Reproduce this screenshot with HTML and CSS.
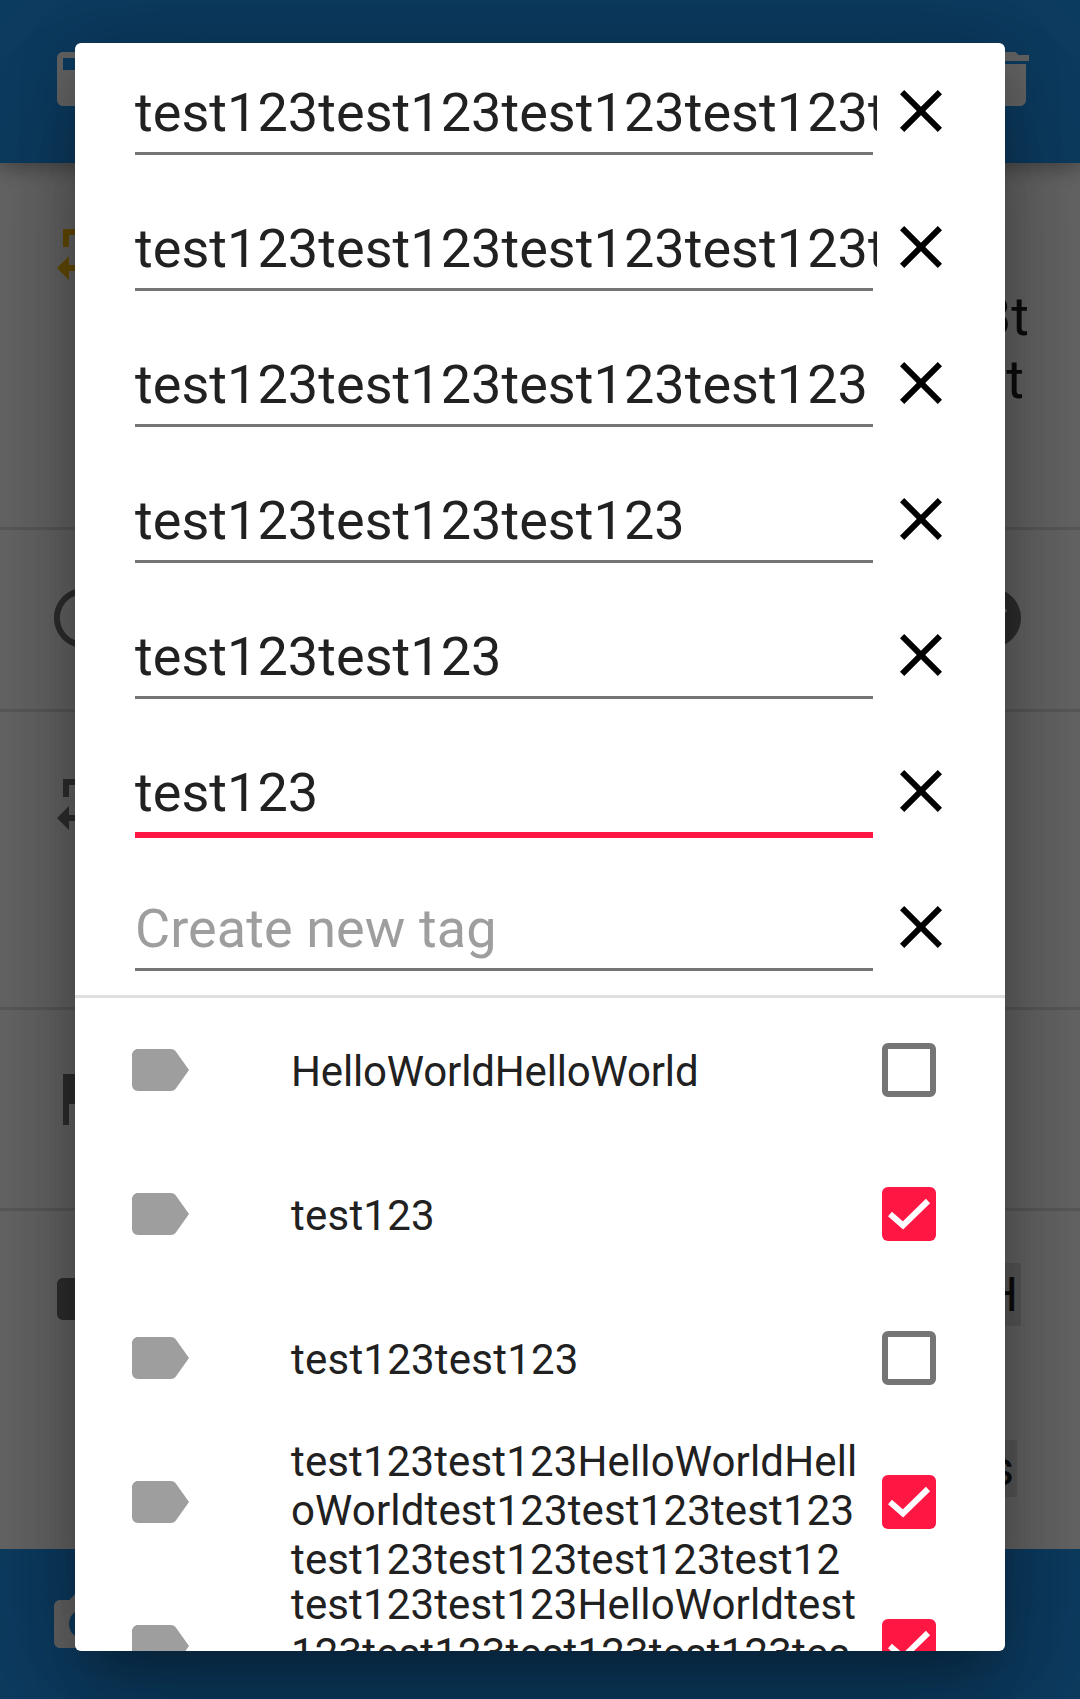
FILE: index.html
```html
<!DOCTYPE html>
<html lang="en">
<head>
    <meta charset="utf-8">
    <title>Edit tags</title>
    <link rel="stylesheet" href="styles.css">
</head>
<body>
<svg class="sprites" width="0" height="0">
    <symbol id="i-close" viewBox="0 0 24 24"><path d="M19 6.41L17.59 5 12 10.59 6.41 5 5 6.41 10.59 12 5 17.59 6.41 19 12 13.41 17.59 19 19 17.59 13.41 12z"/></symbol>
    <symbol id="i-label" viewBox="0 0 24 24"><path d="M17.63 5.84C17.27 5.33 16.67 5 16 5L5 5.01C3.9 5.01 3 5.9 3 7v10c0 1.1.9 1.99 2 1.99L16 19c.67 0 1.27-.33 1.63-.84L22 12l-4.37-6.16z"/></symbol>
    <symbol id="i-repeat" viewBox="0 0 24 24"><path d="M7 7h10v3l4-4-4-4v3H5v6h2V7zm10 10H7v-3l-4 4 4 4v-3h12v-6h-2v4z"/></symbol>
    <symbol id="i-check" viewBox="0 0 54 54"><polyline points="8,27 21,38.5 46,14"/></symbol>
</svg>

<div class="page">
    <header class="topbar">
        <svg class="icon icon-white" viewBox="0 0 24 24"><path d="M19 3H5c-1.1 0-2 .9-2 2v14c0 1.1.9 2 2 2h14c1.1 0 2-.9 2-2V5c0-1.1-.9-2-2-2zm0 6H5V5h14v4z"/></svg>
        <svg class="icon icon-white" viewBox="0 0 24 24"><path d="M6 19c0 1.1.9 2 2 2h8c1.1 0 2-.9 2-2V7H6v12zM19 4h-3.5l-1-1h-5l-1 1H5v2h14V4z"/></svg>
    </header>

    <section class="row row-title">
        <svg class="icon icon-amber"><use href="#i-repeat"/></svg>
        <div class="title-text">
            <div>test123t</div>
            <div class="title-second">test</div>
        </div>
    </section>

    <section class="row row-status">
        <svg class="icon icon-dark" viewBox="0 0 24 24"><path d="M12 2C6.47 2 2 6.47 2 12s4.47 10 10 10 10-4.47 10-10S17.53 2 12 2zm0 18c-4.41 0-8-3.59-8-8s3.59-8 8-8 8 3.59 8 8-3.59 8-8 8z"/></svg>
        <svg class="icon icon-dark" viewBox="0 0 24 24"><path d="M12 2C6.48 2 2 6.48 2 12s4.48 10 10 10 10-4.48 10-10S17.52 2 12 2zm-2 15l-5-5 1.41-1.41L10 14.17l6-6 1.41 1.41z"/></svg>
    </section>

    <section class="row row-repeat">
        <svg class="icon icon-dark"><use href="#i-repeat"/></svg>
    </section>

    <section class="row row-flag">
        <svg class="icon icon-dark" viewBox="0 0 24 24"><path d="M14.4 6L14 4H5v17h2v-7h5.6l.4 2h7V6z"/></svg>
    </section>

    <section class="row row-tags">
        <svg class="icon icon-dark"><use href="#i-label"/></svg>
        <div class="chips">
            <span class="chip chip-first">HelloWorldH</span>
            <span class="chip chip-second">tests</span>
        </div>
    </section>

    <footer class="bottombar">
        <svg class="icon icon-white" viewBox="0 0 24 24"><path d="M9 2L7.17 4H4c-1.1 0-2 .9-2 2v12c0 1.1.9 2 2 2h16c1.1 0 2-.9 2-2V6c0-1.1-.9-2-2-2h-3.17L15 2H9zm3 15c-2.76 0-5-2.24-5-5s2.24-5 5-5 5 2.24 5 5-2.24 5-5 5z"/></svg>
    </footer>
</div>

<div class="scrim">
    <div class="dialog">
        <div class="tag-edit">
            <div class="tag-field"><div class="tag-value">test123test123test123test123test123</div></div>
            <svg class="icon close-icon"><use href="#i-close"/></svg>
        </div>
        <div class="tag-edit">
            <div class="tag-field"><div class="tag-value">test123test123test123test123test123</div></div>
            <svg class="icon close-icon"><use href="#i-close"/></svg>
        </div>
        <div class="tag-edit">
            <div class="tag-field"><div class="tag-value">test123test123test123test123</div></div>
            <svg class="icon close-icon"><use href="#i-close"/></svg>
        </div>
        <div class="tag-edit">
            <div class="tag-field"><div class="tag-value">test123test123test123</div></div>
            <svg class="icon close-icon"><use href="#i-close"/></svg>
        </div>
        <div class="tag-edit">
            <div class="tag-field"><div class="tag-value">test123test123</div></div>
            <svg class="icon close-icon"><use href="#i-close"/></svg>
        </div>
        <div class="tag-edit">
            <div class="tag-field tag-field-focus"><div class="tag-value">test123</div></div>
            <svg class="icon close-icon"><use href="#i-close"/></svg>
        </div>
        <div class="tag-edit">
            <div class="tag-field"><div class="tag-value tag-placeholder">Create new tag</div></div>
            <svg class="icon close-icon"><use href="#i-close"/></svg>
        </div>

        <div class="tag-list">
            <div class="tag-item">
                <svg class="icon icon-label"><use href="#i-label"/></svg>
                <div class="tag-name tag-name-word">HelloWorldHelloWorld</div>
                <span class="checkbox"></span>
            </div>
            <div class="tag-item">
                <svg class="icon icon-label"><use href="#i-label"/></svg>
                <div class="tag-name">test123</div>
                <span class="checkbox checkbox-on"><svg class="check-mark"><use href="#i-check"/></svg></span>
            </div>
            <div class="tag-item">
                <svg class="icon icon-label"><use href="#i-label"/></svg>
                <div class="tag-name">test123test123</div>
                <span class="checkbox"></span>
            </div>
            <div class="tag-item">
                <svg class="icon icon-label"><use href="#i-label"/></svg>
                <div class="tag-name tag-name-long">test123test123HelloWorldHelloWorldtest123test123test123test123test123test123test12</div>
                <span class="checkbox checkbox-on"><svg class="check-mark"><use href="#i-check"/></svg></span>
            </div>
            <div class="tag-item">
                <svg class="icon icon-label"><use href="#i-label"/></svg>
                <div class="tag-name tag-name-long tag-name-last">test123test123HelloWorldtest123test123test123test123test123</div>
                <span class="checkbox checkbox-on"><svg class="check-mark"><use href="#i-check"/></svg></span>
            </div>
        </div>
    </div>
</div>
</body>
</html>
```

FILE: styles.css
```css
body {
    font-family: Roboto, "Liberation Sans", sans-serif;
    background-color: white;
    margin: 0;
    padding: 0;
    color: #212121;
}

.sprites {
    display: block;
    height: 0;
}

.page {
    height: 1699px;
    display: flex;
    flex-direction: column;
    overflow: hidden;
}

.icon {
    display: block;
    flex: none;
    width: 72px;
    height: 72px;
}

.icon-white {
    fill: white;
}

.icon-amber {
    fill: #ffc107;
}

.icon-dark {
    fill: #757575;
}

/* page behind the dialog */
.topbar {
    flex: none;
    height: 163px;
    box-sizing: border-box;
    padding: 43px 36px 0 48px;
    display: flex;
    justify-content: space-between;
    background-color: #2196f3;
    box-shadow: 0 6px 18px rgba(0, 0, 0, 0.3);
    position: relative;
}

.row {
    flex: none;
    box-sizing: border-box;
    display: flex;
    justify-content: space-between;
    padding: 52px 53px 0 48px;
    border-bottom: 3px solid #e0e0e0;
}

.row-title {
    height: 367px;
    padding-top: 51px;
    padding-right: 51px;
}

.row-status {
    height: 182px;
}

.row-repeat {
    height: 298px;
}

.row-flag {
    height: 201px;
}

.row-tags {
    flex: 1;
    border-bottom: none;
    padding-right: 59px;
}

.title-text {
    margin-top: 71px;
    font-size: 54px;
    line-height: 63px;
    text-align: right;
}

.title-second {
    padding-right: 5px;
}

.chips {
    display: flex;
    flex-direction: column;
    align-items: flex-end;
    gap: 114px;
}

.chip {
    background-color: #e0e0e0;
    font-size: 48px;
    line-height: 63px;
    padding: 0 3px 0 12px;
}

.chip-second {
    line-height: 57px;
    margin-right: 4px;
}

.bottombar {
    flex: none;
    height: 150px;
    box-sizing: border-box;
    padding: 39px 48px 0;
    background-color: #2196f3;
}

/* dialog */
.scrim {
    position: absolute;
    top: 0;
    left: 0;
    width: 1080px;
    height: 1699px;
    box-sizing: border-box;
    padding: 43px 75px 48px;
    display: flex;
    background-color: rgba(0, 0, 0, 0.6);
}

.dialog {
    flex: 1;
    background-color: white;
    border-radius: 6px;
    overflow: hidden;
    box-shadow: 0 0 60px rgba(0, 0, 0, 0.15), 0 72px 114px 9px rgba(0, 0, 0, 0.14), 0 27px 138px 24px rgba(0, 0, 0, 0.12), 0 33px 45px -21px rgba(0, 0, 0, 0.2);
}

.tag-edit {
    height: 136px;
    display: flex;
    align-items: center;
}

.tag-field {
    align-self: flex-start;
    width: 738px;
    margin-left: 60px;
    margin-right: 12px;
    box-sizing: border-box;
    height: 112px;
    padding-top: 38px;
    border-bottom: 3px solid #757575;
}

.tag-field-focus {
    height: 115px;
    border-bottom: 6px solid #ff1744;
}

.tag-value {
    font-size: 54px;
    line-height: 64px;
    letter-spacing: 0.05px;
    white-space: nowrap;
    overflow: hidden;
    margin-right: -4px;
}

.tag-placeholder {
    color: #9e9e9e;
    letter-spacing: 0.08px;
}

.close-icon {
    fill: black;
}

.tag-list {
    border-top: 3px solid #e0e0e0;
}

.tag-item {
    height: 144px;
    display: flex;
    align-items: center;
    padding-left: 48px;
}

.icon-label {
    fill: #9e9e9e;
}

.tag-name {
    flex: none;
    width: 568px;
    margin-top: 2px;
    margin-left: 96px;
    margin-right: 23px;
    font-size: 42px;
    line-height: 49px;
    letter-spacing: 0.23px;
    word-break: break-all;
}

.tag-name-word {
    letter-spacing: -0.16px;
}

.tag-name-long {
    align-self: flex-start;
    margin-top: 7px;
    letter-spacing: 0.14px;
}

.tag-name-last {
    margin-top: 6px;
}

.checkbox {
    flex: none;
    width: 54px;
    height: 54px;
    box-sizing: border-box;
    border: 6px solid #757575;
    border-radius: 6px;
}

.checkbox-on {
    border: none;
    background-color: #ff1744;
}

.check-mark {
    display: block;
    width: 54px;
    height: 54px;
    fill: none;
    stroke: white;
    stroke-width: 6px;
}
```
